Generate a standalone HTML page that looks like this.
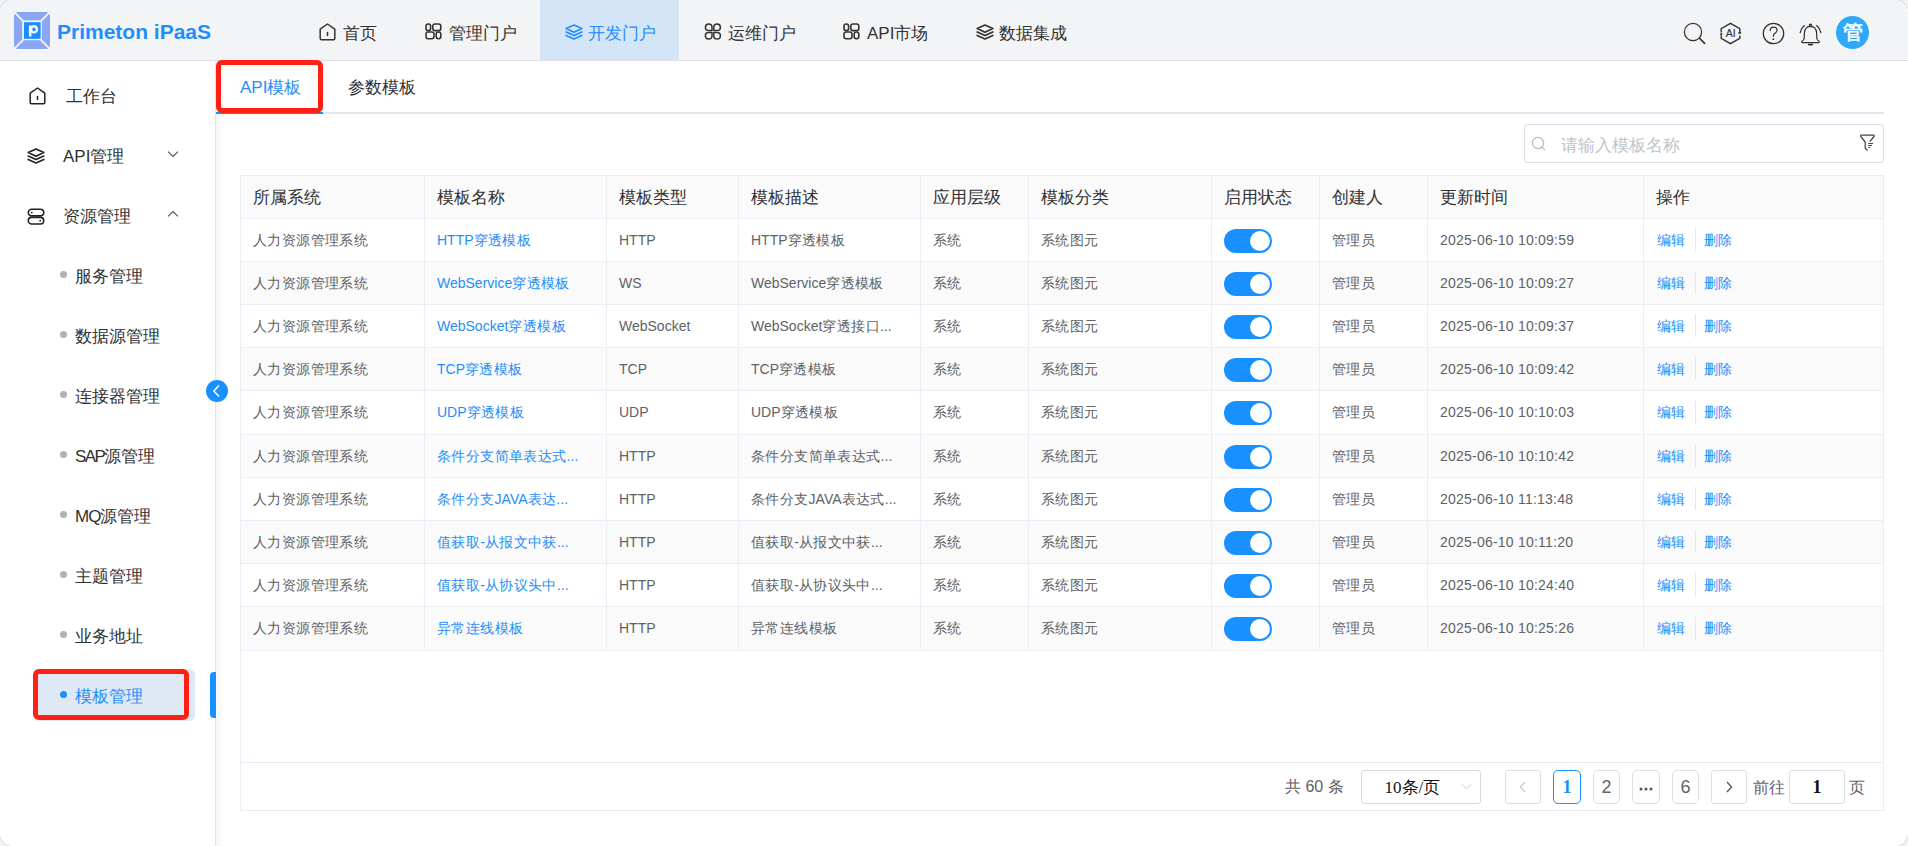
<!DOCTYPE html><html><head><meta charset="utf-8"><title>Primeton iPaaS</title><style>
*{box-sizing:border-box;margin:0;padding:0}
html,body{width:1908px;height:846px;overflow:hidden;background:#f1f2f4}
body{font-family:"Liberation Sans",sans-serif;color:#333;position:relative}
.abs{position:absolute}
.frame{position:absolute;left:0;top:0;width:1908px;height:846px;border-radius:13px;overflow:hidden;background:#fff;box-shadow:0 0 0 1px rgba(0,0,0,0.09)}
.hdr{position:absolute;left:0;top:0;width:1908px;height:61px;background:#f3f4f6;border-bottom:1px solid #dfe1e5}
.nav{position:absolute;top:0;height:60px;font-size:17px;color:#333;white-space:nowrap}
.nav span{position:absolute;top:22px;line-height:22px}
.nav svg{position:absolute}
.navact{background:#d4e5f7}
.side{position:absolute;left:0;top:61px;width:216px;height:785px;background:#fff;border-right:1px solid #e4e4e4}
.sshadow{position:absolute;left:216px;top:61px;width:10px;height:785px;background:linear-gradient(to right,rgba(0,0,0,0.035),rgba(0,0,0,0))}
.mi{position:absolute;font-size:17px;line-height:22px;color:#303133;white-space:nowrap}
.dot{position:absolute;width:7px;height:7px;border-radius:50%;background:#b3b3b3}
.tx{position:absolute;white-space:nowrap;font-size:14px;line-height:20px;color:#606266}
.c{letter-spacing:0.4px}
.th{position:absolute;white-space:nowrap;font-size:17px;line-height:22px;color:#303133}
.lk{color:#1f8dfb}
.vl{position:absolute;width:1px;background:#ebeef5}
.hl{position:absolute;height:1px;background:#ebeef5}
.sw{position:absolute;width:48px;height:24px;border-radius:12px;background:#1890ff}
.sw::after{content:"";position:absolute;left:26px;top:2px;width:20px;height:20px;border-radius:50%;background:#fff}
.pg{position:absolute;top:770px;height:34px;border:1px solid #dcdfe6;border-radius:5px;background:#fff;font-size:18px;line-height:32px;text-align:center;color:#606266;font-family:"Liberation Sans",sans-serif}
</style></head><body><div class="frame">
<div class="hdr"></div>
<svg class="abs" style="left:14px;top:11.5px" width="36" height="37" viewBox="0 0 36 37">
<rect x="0" y="0" width="36" height="37" rx="4" fill="#8aa6f5"/>
<path d="M-1 -1 L9.2 9.2 M37 -1 L26.8 9.2 M-1 38 L9.2 27.8 M37 38 L26.8 27.8" stroke="#f3f4f6" stroke-width="1.9"/>
<rect x="8.2" y="8.4" width="19.6" height="19.8" fill="#f3f4f6"/>
<rect x="10" y="10.2" width="16.6" height="16.6" fill="#1a8cff"/>
<path d="M16.2 13.6 V24.6" stroke="#fff" stroke-width="2.6"/><ellipse cx="20" cy="17.3" rx="3" ry="3.1" fill="none" stroke="#fff" stroke-width="2.4"/>
</svg>
<div class="abs" style="left:57px;top:18px;font-size:21px;line-height:28px;font-weight:bold;color:#1e8ffa;white-space:nowrap">Primeton iPaaS</div>
<div class="abs navact" style="left:540px;top:0;width:139px;height:60px"></div>
<svg class="abs" style="left:319px;top:23px" width="17" height="18" viewBox="0 0 17 18"><path d="M1.2 6.2 L8.5 1 L15.8 6.2 L15.8 15.6 Q15.8 16.8 14.6 16.8 L2.4 16.8 Q1.2 16.8 1.2 15.6 Z" fill="none" stroke="#333" stroke-width="1.5" stroke-linejoin="round"/><path d="M8.5 9.6 V12.6" stroke="#333" stroke-width="1.5" stroke-linecap="round"/></svg>
<div class="abs" style="left:343px;top:23px;font-size:17px;line-height:22px;color:#333;white-space:nowrap">首页</div>
<svg class="abs" style="left:425px;top:23px" width="17" height="17" viewBox="0 0 17 17" fill="none" stroke="#333" stroke-width="1.6"><rect x="1" y="1" width="4.6" height="6.6" rx="2.2"/><rect x="7.8" y="1" width="8" height="6.6" rx="2.2"/><rect x="1" y="9" width="8" height="6.8" rx="2.2"/><rect x="11.2" y="9" width="4.6" height="6.8" rx="2.2"/></svg>
<div class="abs" style="left:449px;top:23px;font-size:17px;line-height:22px;color:#333;white-space:nowrap">管理门户</div>
<svg class="abs" style="left:565px;top:24px" width="18" height="16" viewBox="0 0 18 16" fill="none" stroke="#1f8dfb" stroke-width="1.7" stroke-linejoin="round" stroke-linecap="round"><path d="M9 1 L16.8 4.6 L9 8.2 L1.2 4.6 Z"/><path d="M1.2 8 L9 11.6 L16.8 8"/><path d="M1.2 11.4 L9 15 L16.8 11.4"/></svg>
<div class="abs" style="left:588px;top:23px;font-size:17px;line-height:22px;color:#1f8dfb;white-space:nowrap">开发门户</div>
<svg class="abs" style="left:704px;top:23px" width="18" height="17" viewBox="0 0 18 17" fill="none" stroke="#333" stroke-width="1.5" stroke-linejoin="round"><path d="M8 7.6 H4.6 A3.3 3.3 0 1 1 8 4.3 Z"/><path d="M9.8 7.6 H13.2 A3.3 3.3 0 1 0 9.8 4.3 Z"/><path d="M8 9.4 H4.6 A3.3 3.3 0 1 0 8 12.7 Z"/><path d="M9.8 9.4 V12.7 A3.3 3.3 0 1 0 13.1 9.4 Z"/></svg>
<div class="abs" style="left:728px;top:23px;font-size:17px;line-height:22px;color:#333;white-space:nowrap">运维门户</div>
<svg class="abs" style="left:843px;top:23px" width="17" height="17" viewBox="0 0 17 17" fill="none" stroke="#333" stroke-width="1.6"><rect x="1" y="1" width="4.6" height="6.6" rx="2.2"/><rect x="7.8" y="1" width="8" height="6.6" rx="2.2"/><rect x="1" y="9" width="8" height="6.8" rx="2.2"/><rect x="11.2" y="9" width="4.6" height="6.8" rx="2.2"/></svg>
<div class="abs" style="left:867px;top:23px;font-size:17px;line-height:22px;color:#333;white-space:nowrap">API市场</div>
<svg class="abs" style="left:976px;top:24px" width="18" height="16" viewBox="0 0 18 16" fill="none" stroke="#333" stroke-width="1.7" stroke-linejoin="round" stroke-linecap="round"><path d="M9 1 L16.8 4.6 L9 8.2 L1.2 4.6 Z"/><path d="M1.2 8 L9 11.6 L16.8 8"/><path d="M1.2 11.4 L9 15 L16.8 11.4"/></svg>
<div class="abs" style="left:999px;top:23px;font-size:17px;line-height:22px;color:#333;white-space:nowrap">数据集成</div>
<svg class="abs" style="left:1682px;top:21px" width="26" height="26" viewBox="0 0 26 26" fill="none" stroke="#333" stroke-width="1.25"><circle cx="11" cy="11" r="8.6"/><path d="M17.6 17.4 L22.6 22.4" stroke-linecap="round" stroke-width="1.6"/></svg>
<svg class="abs" style="left:1718px;top:21px" width="25" height="25" viewBox="0 0 25 25" fill="none" stroke="#333" stroke-width="1.4">
<path d="M3.2 11.5 V7.6 L12.5 2.3 L21.8 7.6 V10.2"/><path d="M21.8 14.4 V17.4 L12.5 22.7 L3.2 17.4 V14.2"/>
<circle cx="3.3" cy="13.2" r="1.1" fill="#333" stroke="none"/><path d="M20.6 12.2 L21.8 10.2 L23 12.2 Z" fill="#333" stroke="#333" stroke-width="1"/>
<text x="12.6" y="16" text-anchor="middle" font-family="Liberation Sans" font-size="10.5" fill="#333" stroke="#333" stroke-width="0.15">AI</text></svg>
<svg class="abs" style="left:1761px;top:21px" width="25" height="25" viewBox="0 0 25 25" fill="none" stroke="#333" stroke-width="1.25"><circle cx="12.5" cy="12.5" r="10.2"/><path d="M9.2 9.6 Q9.2 6.2 12.6 6.2 Q16 6.2 16 9.2 Q16 11.2 13.6 12.6 Q12.4 13.4 12.4 15.2" stroke-linecap="round"/><circle cx="12.4" cy="18.2" r="0.9" fill="#333" stroke="none"/></svg>
<svg class="abs" style="left:1798px;top:22px" width="25" height="25" viewBox="0 0 25 25" fill="none" stroke="#333" stroke-width="1.25">
<circle cx="12.5" cy="3.1" r="1.1"/><path d="M12.5 4.3 Q6.8 4.5 6.4 10.8 L6.2 16 Q6 18.3 4 19.3 Q3.2 20.3 4.2 20.5 H20.8 Q21.8 20.3 21 19.3 Q19 18.3 18.8 16 L18.6 10.8 Q18.2 4.5 12.5 4.3 Z"/><path d="M10.6 22.6 H14.4" stroke-width="1.6" stroke-linecap="round"/>
<path d="M6.4 3.6 Q3 6.4 2.2 10.6" stroke-linecap="round"/><path d="M18.6 3.6 Q22 6.4 22.8 10.6" stroke-linecap="round"/></svg>
<div class="abs" style="left:1836px;top:16px;width:33px;height:33px;border-radius:50%;background:#2ea8fb"></div>
<div class="abs" style="left:1836px;top:16px;width:33px;height:33px;font-size:20px;line-height:33px;text-align:center;font-weight:bold;color:#fff">管</div>
<div class="side"></div><div class="sshadow"></div>
<svg class="abs" style="left:28.5px;top:85.5px" width="17" height="20" viewBox="0 0 17 18"><path d="M1.2 6.2 L8.5 1 L15.8 6.2 L15.8 15.6 Q15.8 16.8 14.6 16.8 L2.4 16.8 Q1.2 16.8 1.2 15.6 Z" fill="none" stroke="#222" stroke-width="1.5" stroke-linejoin="round"/><path d="M8.5 9.6 V12.6" stroke="#222" stroke-width="1.5" stroke-linecap="round"/></svg>
<div class="mi" style="left:66px;top:86px">工作台</div>
<svg class="abs" style="left:27px;top:148px" width="18" height="16" viewBox="0 0 18 16" fill="none" stroke="#222" stroke-width="1.6" stroke-linejoin="round" stroke-linecap="round"><path d="M9 1 L16.8 4.6 L9 8.2 L1.2 4.6 Z"/><path d="M1.2 8 L9 11.6 L16.8 8"/><path d="M1.2 11.4 L9 15 L16.8 11.4"/></svg>
<div class="mi" style="left:63px;top:146px">API管理</div>
<svg class="abs" style="left:166px;top:149px" width="14" height="10" viewBox="0 0 14 10" fill="none" stroke="#555" stroke-width="1.2"><path d="M2 2.6 L7 7.4 L12 2.6"/></svg>
<svg class="abs" style="left:27px;top:208px" width="18" height="18" viewBox="0 0 18 18" fill="none" stroke="#222" stroke-width="1.6"><rect x="1.3" y="1.3" width="15.4" height="6.6" rx="3.3"/><rect x="1.3" y="9.4" width="15.4" height="6.6" rx="3.3"/><circle cx="4.8" cy="4.6" r="0.9" fill="#222" stroke="none"/><circle cx="13.2" cy="12.7" r="0.9" fill="#222" stroke="none"/></svg>
<div class="mi" style="left:63px;top:206px">资源管理</div>
<svg class="abs" style="left:166px;top:209px" width="14" height="10" viewBox="0 0 14 10" fill="none" stroke="#555" stroke-width="1.2"><path d="M2 7.4 L7 2.6 L12 7.4"/></svg>
<div class="abs" style="left:33px;top:669px;width:162px;height:52px;border-radius:6px;background:#dfe9f6"></div>
<div class="dot" style="left:60px;top:271px;background:#b3b3b3"></div>
<div class="mi" style="left:75px;top:266px;color:#303133">服务管理</div>
<div class="dot" style="left:60px;top:331px;background:#b3b3b3"></div>
<div class="mi" style="left:75px;top:326px;color:#303133">数据源管理</div>
<div class="dot" style="left:60px;top:391px;background:#b3b3b3"></div>
<div class="mi" style="left:75px;top:386px;color:#303133">连接器管理</div>
<div class="dot" style="left:60px;top:451px;background:#b3b3b3"></div>
<div class="mi" style="left:75px;top:446px;color:#303133"><span style="letter-spacing:-1.6px">SAP</span>源管理</div>
<div class="dot" style="left:60px;top:511px;background:#b3b3b3"></div>
<div class="mi" style="left:75px;top:506px;color:#303133"><span style="letter-spacing:-1px">MQ</span>源管理</div>
<div class="dot" style="left:60px;top:571px;background:#b3b3b3"></div>
<div class="mi" style="left:75px;top:566px;color:#303133">主题管理</div>
<div class="dot" style="left:60px;top:631px;background:#b3b3b3"></div>
<div class="mi" style="left:75px;top:626px;color:#303133">业务地址</div>
<div class="dot" style="left:60px;top:691px;background:#1f8dfb"></div>
<div class="mi" style="left:75px;top:686px;color:#1f8dfb">模板管理</div>
<div class="abs" style="left:33px;top:669px;width:156px;height:51px;border:5px solid #ff1f13;border-radius:6px"></div>
<div class="abs" style="left:210px;top:672px;width:6px;height:46px;border-radius:4px 0 0 4px;background:#1890ff"></div>
<svg class="abs" style="left:206px;top:380px" width="22" height="22" viewBox="0 0 22 22"><circle cx="11" cy="11" r="11" fill="#1890ff"/><path d="M13 5.6 L7.8 11 L13 16.4" fill="none" stroke="#fff" stroke-width="1.5"/></svg>
<div class="abs" style="left:216px;top:112px;width:1668px;height:2px;background:#e4e7ed"></div>
<div class="abs" style="left:216px;top:111.5px;width:107px;height:2px;background:#1890ff"></div>
<div class="abs" style="left:240px;top:77px;font-size:17px;line-height:22px;color:#1f8dfb;white-space:nowrap">API模板</div>
<div class="abs" style="left:347.5px;top:77px;font-size:17px;line-height:22px;color:#303133;white-space:nowrap">参数模板</div>
<div class="abs" style="left:216px;top:60px;width:107px;height:53px;border:5px solid #ff1f13;border-radius:6px"></div>
<div class="abs" style="left:1524px;top:124px;width:360px;height:39px;border:1px solid #dcdfe6;border-radius:3px;background:#fff"></div>
<svg class="abs" style="left:1531px;top:136px" width="16" height="16" viewBox="0 0 16 16" fill="none" stroke="#b8bcc4" stroke-width="1.3"><circle cx="7" cy="7" r="5.6"/><path d="M11 11 L13.6 13.6" stroke-linecap="round"/></svg>
<div class="abs" style="left:1561px;top:135px;font-size:17px;line-height:22px;color:#c0c4cc;white-space:nowrap">请输入模板名称</div>
<svg class="abs" style="left:1859px;top:133px" width="17" height="19" viewBox="0 0 17 19" fill="none" stroke="#444" stroke-width="1.25" stroke-linejoin="round"><path d="M2.2 2.2 H14.6 Q15.6 2.5 15 3.5 L10.8 8.6"/><path d="M2.2 2.2 Q1.2 2.5 1.8 3.5 L6.2 9 V15 L8.6 17.6"/><path d="M9.2 10.5 H14.2 M9.2 12.5 H13 M9.2 14.5 H11.4" stroke-width="1"/></svg>
<div class="abs" style="left:240px;top:175px;width:1644px;height:636px;border:1px solid #ebeef5;background:#fff"></div>
<div class="abs" style="left:241px;top:176px;width:1642px;height:42.0px;background:#fafafa"></div>
<div class="abs" style="left:241px;top:261px;width:1642px;height:43px;background:#fafafa"></div>
<div class="abs" style="left:241px;top:347px;width:1642px;height:43px;background:#fafafa"></div>
<div class="abs" style="left:241px;top:434px;width:1642px;height:43px;background:#fafafa"></div>
<div class="abs" style="left:241px;top:520px;width:1642px;height:43px;background:#fafafa"></div>
<div class="abs" style="left:241px;top:606px;width:1642px;height:44px;background:#fafafa"></div>
<div class="hl" style="left:240px;top:218px;width:1644px"></div>
<div class="hl" style="left:240px;top:261px;width:1644px"></div>
<div class="hl" style="left:240px;top:304px;width:1644px"></div>
<div class="hl" style="left:240px;top:347px;width:1644px"></div>
<div class="hl" style="left:240px;top:390px;width:1644px"></div>
<div class="hl" style="left:240px;top:434px;width:1644px"></div>
<div class="hl" style="left:240px;top:477px;width:1644px"></div>
<div class="hl" style="left:240px;top:520px;width:1644px"></div>
<div class="hl" style="left:240px;top:563px;width:1644px"></div>
<div class="hl" style="left:240px;top:606px;width:1644px"></div>
<div class="hl" style="left:240px;top:650px;width:1644px"></div>
<div class="vl" style="left:424px;top:175px;height:476px"></div>
<div class="vl" style="left:606px;top:175px;height:476px"></div>
<div class="vl" style="left:738px;top:175px;height:476px"></div>
<div class="vl" style="left:920px;top:175px;height:476px"></div>
<div class="vl" style="left:1028px;top:175px;height:476px"></div>
<div class="vl" style="left:1211px;top:175px;height:476px"></div>
<div class="vl" style="left:1319px;top:175px;height:476px"></div>
<div class="vl" style="left:1427px;top:175px;height:476px"></div>
<div class="vl" style="left:1643px;top:175px;height:476px"></div>
<div class="hl" style="left:240px;top:762px;width:1644px"></div>
<div class="th" style="left:253px;top:187px">所属系统</div>
<div class="th" style="left:437px;top:187px">模板名称</div>
<div class="th" style="left:619px;top:187px">模板类型</div>
<div class="th" style="left:751px;top:187px">模板描述</div>
<div class="th" style="left:933px;top:187px">应用层级</div>
<div class="th" style="left:1041px;top:187px">模板分类</div>
<div class="th" style="left:1224px;top:187px">启用状态</div>
<div class="th" style="left:1332px;top:187px">创建人</div>
<div class="th" style="left:1440px;top:187px">更新时间</div>
<div class="th" style="left:1656px;top:187px">操作</div>
<div class="tx" style="left:253px;top:229.6px"><span class="c">人力资源管理系统</span></div>
<div class="tx lk" style="left:437px;top:229.6px">HTTP<span class="c">穿透模板</span></div>
<div class="tx" style="left:619px;top:229.6px">HTTP</div>
<div class="tx" style="left:751px;top:229.6px">HTTP<span class="c">穿透模板</span></div>
<div class="tx" style="left:933px;top:229.6px"><span class="c">系统</span></div>
<div class="tx" style="left:1041px;top:229.6px"><span class="c">系统图元</span></div>
<div class="sw" style="left:1224px;top:228.5px"></div>
<div class="tx" style="left:1332px;top:229.6px"><span class="c">管理员</span></div>
<div class="tx" style="left:1440px;top:229.6px;letter-spacing:0.22px">2025-06-10 10:09:59</div>
<div class="tx lk" style="left:1657px;top:229.6px"><span class="c">编辑</span></div>
<div class="abs" style="left:1695px;top:228.0px;width:1px;height:23px;background:#e4e7ed"></div>
<div class="tx lk" style="left:1704px;top:229.6px"><span class="c">删除</span></div>
<div class="tx" style="left:253px;top:272.6px"><span class="c">人力资源管理系统</span></div>
<div class="tx lk" style="left:437px;top:272.6px">WebService<span class="c">穿透模板</span></div>
<div class="tx" style="left:619px;top:272.6px">WS</div>
<div class="tx" style="left:751px;top:272.6px">WebService<span class="c">穿透模板</span></div>
<div class="tx" style="left:933px;top:272.6px"><span class="c">系统</span></div>
<div class="tx" style="left:1041px;top:272.6px"><span class="c">系统图元</span></div>
<div class="sw" style="left:1224px;top:271.5px"></div>
<div class="tx" style="left:1332px;top:272.6px"><span class="c">管理员</span></div>
<div class="tx" style="left:1440px;top:272.6px;letter-spacing:0.22px">2025-06-10 10:09:27</div>
<div class="tx lk" style="left:1657px;top:272.6px"><span class="c">编辑</span></div>
<div class="abs" style="left:1695px;top:271.0px;width:1px;height:23px;background:#e4e7ed"></div>
<div class="tx lk" style="left:1704px;top:272.6px"><span class="c">删除</span></div>
<div class="tx" style="left:253px;top:315.6px"><span class="c">人力资源管理系统</span></div>
<div class="tx lk" style="left:437px;top:315.6px">WebSocket<span class="c">穿透模板</span></div>
<div class="tx" style="left:619px;top:315.6px">WebSocket</div>
<div class="tx" style="left:751px;top:315.6px">WebSocket<span class="c">穿透接口</span>...</div>
<div class="tx" style="left:933px;top:315.6px"><span class="c">系统</span></div>
<div class="tx" style="left:1041px;top:315.6px"><span class="c">系统图元</span></div>
<div class="sw" style="left:1224px;top:314.5px"></div>
<div class="tx" style="left:1332px;top:315.6px"><span class="c">管理员</span></div>
<div class="tx" style="left:1440px;top:315.6px;letter-spacing:0.22px">2025-06-10 10:09:37</div>
<div class="tx lk" style="left:1657px;top:315.6px"><span class="c">编辑</span></div>
<div class="abs" style="left:1695px;top:314.0px;width:1px;height:23px;background:#e4e7ed"></div>
<div class="tx lk" style="left:1704px;top:315.6px"><span class="c">删除</span></div>
<div class="tx" style="left:253px;top:358.6px"><span class="c">人力资源管理系统</span></div>
<div class="tx lk" style="left:437px;top:358.6px">TCP<span class="c">穿透模板</span></div>
<div class="tx" style="left:619px;top:358.6px">TCP</div>
<div class="tx" style="left:751px;top:358.6px">TCP<span class="c">穿透模板</span></div>
<div class="tx" style="left:933px;top:358.6px"><span class="c">系统</span></div>
<div class="tx" style="left:1041px;top:358.6px"><span class="c">系统图元</span></div>
<div class="sw" style="left:1224px;top:357.5px"></div>
<div class="tx" style="left:1332px;top:358.6px"><span class="c">管理员</span></div>
<div class="tx" style="left:1440px;top:358.6px;letter-spacing:0.22px">2025-06-10 10:09:42</div>
<div class="tx lk" style="left:1657px;top:358.6px"><span class="c">编辑</span></div>
<div class="abs" style="left:1695px;top:357.0px;width:1px;height:23px;background:#e4e7ed"></div>
<div class="tx lk" style="left:1704px;top:358.6px"><span class="c">删除</span></div>
<div class="tx" style="left:253px;top:402.1px"><span class="c">人力资源管理系统</span></div>
<div class="tx lk" style="left:437px;top:402.1px">UDP<span class="c">穿透模板</span></div>
<div class="tx" style="left:619px;top:402.1px">UDP</div>
<div class="tx" style="left:751px;top:402.1px">UDP<span class="c">穿透模板</span></div>
<div class="tx" style="left:933px;top:402.1px"><span class="c">系统</span></div>
<div class="tx" style="left:1041px;top:402.1px"><span class="c">系统图元</span></div>
<div class="sw" style="left:1224px;top:401.0px"></div>
<div class="tx" style="left:1332px;top:402.1px"><span class="c">管理员</span></div>
<div class="tx" style="left:1440px;top:402.1px;letter-spacing:0.22px">2025-06-10 10:10:03</div>
<div class="tx lk" style="left:1657px;top:402.1px"><span class="c">编辑</span></div>
<div class="abs" style="left:1695px;top:400.5px;width:1px;height:23px;background:#e4e7ed"></div>
<div class="tx lk" style="left:1704px;top:402.1px"><span class="c">删除</span></div>
<div class="tx" style="left:253px;top:445.6px"><span class="c">人力资源管理系统</span></div>
<div class="tx lk" style="left:437px;top:445.6px"><span class="c">条件分支简单表达式</span>...</div>
<div class="tx" style="left:619px;top:445.6px">HTTP</div>
<div class="tx" style="left:751px;top:445.6px"><span class="c">条件分支简单表达式</span>...</div>
<div class="tx" style="left:933px;top:445.6px"><span class="c">系统</span></div>
<div class="tx" style="left:1041px;top:445.6px"><span class="c">系统图元</span></div>
<div class="sw" style="left:1224px;top:444.5px"></div>
<div class="tx" style="left:1332px;top:445.6px"><span class="c">管理员</span></div>
<div class="tx" style="left:1440px;top:445.6px;letter-spacing:0.22px">2025-06-10 10:10:42</div>
<div class="tx lk" style="left:1657px;top:445.6px"><span class="c">编辑</span></div>
<div class="abs" style="left:1695px;top:444.0px;width:1px;height:23px;background:#e4e7ed"></div>
<div class="tx lk" style="left:1704px;top:445.6px"><span class="c">删除</span></div>
<div class="tx" style="left:253px;top:488.6px"><span class="c">人力资源管理系统</span></div>
<div class="tx lk" style="left:437px;top:488.6px"><span class="c">条件分支</span>JAVA<span class="c">表达</span>...</div>
<div class="tx" style="left:619px;top:488.6px">HTTP</div>
<div class="tx" style="left:751px;top:488.6px"><span class="c">条件分支</span>JAVA<span class="c">表达式</span>...</div>
<div class="tx" style="left:933px;top:488.6px"><span class="c">系统</span></div>
<div class="tx" style="left:1041px;top:488.6px"><span class="c">系统图元</span></div>
<div class="sw" style="left:1224px;top:487.5px"></div>
<div class="tx" style="left:1332px;top:488.6px"><span class="c">管理员</span></div>
<div class="tx" style="left:1440px;top:488.6px;letter-spacing:0.22px">2025-06-10 11:13:48</div>
<div class="tx lk" style="left:1657px;top:488.6px"><span class="c">编辑</span></div>
<div class="abs" style="left:1695px;top:487.0px;width:1px;height:23px;background:#e4e7ed"></div>
<div class="tx lk" style="left:1704px;top:488.6px"><span class="c">删除</span></div>
<div class="tx" style="left:253px;top:531.6px"><span class="c">人力资源管理系统</span></div>
<div class="tx lk" style="left:437px;top:531.6px"><span class="c">值获取</span>-<span class="c">从报文中获</span>...</div>
<div class="tx" style="left:619px;top:531.6px">HTTP</div>
<div class="tx" style="left:751px;top:531.6px"><span class="c">值获取</span>-<span class="c">从报文中获</span>...</div>
<div class="tx" style="left:933px;top:531.6px"><span class="c">系统</span></div>
<div class="tx" style="left:1041px;top:531.6px"><span class="c">系统图元</span></div>
<div class="sw" style="left:1224px;top:530.5px"></div>
<div class="tx" style="left:1332px;top:531.6px"><span class="c">管理员</span></div>
<div class="tx" style="left:1440px;top:531.6px;letter-spacing:0.22px">2025-06-10 10:11:20</div>
<div class="tx lk" style="left:1657px;top:531.6px"><span class="c">编辑</span></div>
<div class="abs" style="left:1695px;top:530.0px;width:1px;height:23px;background:#e4e7ed"></div>
<div class="tx lk" style="left:1704px;top:531.6px"><span class="c">删除</span></div>
<div class="tx" style="left:253px;top:574.6px"><span class="c">人力资源管理系统</span></div>
<div class="tx lk" style="left:437px;top:574.6px"><span class="c">值获取</span>-<span class="c">从协议头中</span>...</div>
<div class="tx" style="left:619px;top:574.6px">HTTP</div>
<div class="tx" style="left:751px;top:574.6px"><span class="c">值获取</span>-<span class="c">从协议头中</span>...</div>
<div class="tx" style="left:933px;top:574.6px"><span class="c">系统</span></div>
<div class="tx" style="left:1041px;top:574.6px"><span class="c">系统图元</span></div>
<div class="sw" style="left:1224px;top:573.5px"></div>
<div class="tx" style="left:1332px;top:574.6px"><span class="c">管理员</span></div>
<div class="tx" style="left:1440px;top:574.6px;letter-spacing:0.22px">2025-06-10 10:24:40</div>
<div class="tx lk" style="left:1657px;top:574.6px"><span class="c">编辑</span></div>
<div class="abs" style="left:1695px;top:573.0px;width:1px;height:23px;background:#e4e7ed"></div>
<div class="tx lk" style="left:1704px;top:574.6px"><span class="c">删除</span></div>
<div class="tx" style="left:253px;top:618.1px"><span class="c">人力资源管理系统</span></div>
<div class="tx lk" style="left:437px;top:618.1px"><span class="c">异常连线模板</span></div>
<div class="tx" style="left:619px;top:618.1px">HTTP</div>
<div class="tx" style="left:751px;top:618.1px"><span class="c">异常连线模板</span></div>
<div class="tx" style="left:933px;top:618.1px"><span class="c">系统</span></div>
<div class="tx" style="left:1041px;top:618.1px"><span class="c">系统图元</span></div>
<div class="sw" style="left:1224px;top:617.0px"></div>
<div class="tx" style="left:1332px;top:618.1px"><span class="c">管理员</span></div>
<div class="tx" style="left:1440px;top:618.1px;letter-spacing:0.22px">2025-06-10 10:25:26</div>
<div class="tx lk" style="left:1657px;top:618.1px"><span class="c">编辑</span></div>
<div class="abs" style="left:1695px;top:616.5px;width:1px;height:23px;background:#e4e7ed"></div>
<div class="tx lk" style="left:1704px;top:618.1px"><span class="c">删除</span></div>
<div class="abs" style="left:1285px;top:776px;font-size:16px;line-height:22px;color:#606266;white-space:nowrap">共 60 条</div>
<div class="abs" style="left:1361px;top:770px;width:120px;height:34px;border:1px solid #d9d9d9;border-radius:3px;background:#fff"></div>
<div class="abs" style="left:1384.5px;top:777px;font-size:17px;line-height:22px;color:#111;font-family:'Liberation Serif',serif;white-space:nowrap">10<span style="font-family:'Liberation Sans',sans-serif">条</span>/<span style="font-family:'Liberation Sans',sans-serif">页</span></div>
<svg class="abs" style="left:1460px;top:782px" width="13" height="9" viewBox="0 0 13 9" fill="none" stroke="#c8ccd4" stroke-width="1"><path d="M1.8 2.2 L6.5 6.8 L11.2 2.2"/></svg>
<div class="pg" style="left:1505px;width:36px;border-radius:3px"></div>
<svg class="abs" style="left:1516px;top:780px" width="14" height="14" viewBox="0 0 14 14" fill="none" stroke="#c8cbd1" stroke-width="1.3"><path d="M9 2 L4.4 7 L9 12"/></svg>
<div class="pg" style="left:1553px;width:28px;border-color:#1890ff;color:#1890ff;font-weight:bold;font-family:'Liberation Serif',serif">1</div>
<div class="pg" style="left:1593px;width:27px">2</div>
<div class="pg" style="left:1632px;width:28px"></div>
<svg class="abs" style="left:1632px;top:770px" width="28" height="34" viewBox="0 0 28 34" fill="#555"><circle cx="9" cy="19" r="1.5"/><circle cx="14" cy="19" r="1.5"/><circle cx="19" cy="19" r="1.5"/></svg>
<div class="pg" style="left:1672px;width:27px">6</div>
<div class="pg" style="left:1711px;width:36px;border-radius:3px"></div>
<svg class="abs" style="left:1722px;top:780px" width="14" height="14" viewBox="0 0 14 14" fill="none" stroke="#555" stroke-width="1.3"><path d="M5 2 L9.6 7 L5 12"/></svg>
<div class="abs" style="left:1753px;top:777px;font-size:16px;line-height:22px;color:#606266;white-space:nowrap">前往</div>
<div class="abs" style="left:1789px;top:770px;width:56px;height:34px;border:1px solid #dcdfe6;border-radius:3px;background:#fff;font-family:'Liberation Serif',serif;font-size:18px;font-weight:bold;line-height:33px;text-align:center;color:#111">1</div>
<div class="abs" style="left:1849px;top:777px;font-size:16px;line-height:22px;color:#606266;white-space:nowrap">页</div>
</div></body></html>
